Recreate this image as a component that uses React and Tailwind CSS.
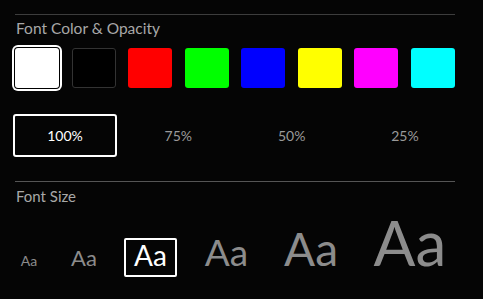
import React, { useState } from 'react';

const colors = ['#ffffff', '#000000', '#ff0000', '#00ff00', '#0000ff', '#ffff00', '#ff00ff', '#00ffff'];
const opacities = ['100%', '75%', '50%', '25%'];
const sizes = [
  { cls: 'text-[14px] w-[18px]', ml: 'ml-[5px]' },
  { cls: 'text-[22px] w-[28px]', ml: 'ml-[32px]' },
  { cls: 'text-[28px] w-[53px]', ml: 'ml-[26px]' },
  { cls: 'text-[37px] w-[47px]', ml: 'ml-[26px]' },
  { cls: 'text-[46px] w-[56px]', ml: 'ml-[33px]' },
  { cls: 'text-[62px] w-[74px]', ml: 'ml-[34px]' },
];

export default function App() {
  const [color, setColor] = useState(0);
  const [opacity, setOpacity] = useState(0);
  const [size, setSize] = useState(2);

  return (
    <div
      className="w-[483px] h-[299px] bg-[#050505] pt-[14px] pl-[15px] overflow-hidden"
      style={{ fontFamily: 'Lato, "Noto Sans", sans-serif' }}
    >
      {/* Font Color & Opacity */}
      <div className="w-[440px] h-px bg-[#3d3d3d]" />
      <div className="mt-[3px] ml-px text-[15.5px] leading-[20px] text-[#a8a8a8]">Font Color &amp; Opacity</div>

      <div className="mt-[10px] w-[440px] flex justify-between">
        {colors.map((c, i) => (
          <button
            key={c}
            onClick={() => setColor(i)}
            className={
              'w-[44px] h-[40px] rounded-[3px] ' +
              (i === color ? 'ring-2 ring-white ring-offset-1 ring-offset-black' : '') +
              (c === '#000000' ? ' border border-[#333333]' : '')
            }
            style={{ backgroundColor: c }}
          />
        ))}
      </div>

      <div className="mt-[26px] -ml-[2px] w-[444px] flex justify-between">
        {opacities.map((o, i) => (
          <button
            key={o}
            onClick={() => setOpacity(i)}
            className={
              'w-[104px] h-[43px] rounded-[3px] border-2 text-[14px] ' +
              (i === opacity ? 'border-white text-white' : 'border-transparent text-[#9a9a9a]')
            }
          >
            {o}
          </button>
        ))}
      </div>

      {/* Font Size */}
      <div className="mt-[24px] w-[440px] h-px bg-[#555555]" />
      <div className="mt-[4px] ml-px text-[15px] leading-[20px] text-[#a8a8a8]">Font Size</div>

      <div className="mt-[5px] flex items-baseline">
        {sizes.map((s, i) => (
          <button
            key={i}
            onClick={() => setSize(i)}
            className={
              s.ml + ' ' + s.cls + ' leading-none whitespace-nowrap text-center ' +
              (i === size ? 'border-2 border-white rounded-[2px] pt-[1px] pb-[6px] text-white' : 'text-[#8c8c8c]')
            }
          >
            Aa
          </button>
        ))}
      </div>
    </div>
  );
}
